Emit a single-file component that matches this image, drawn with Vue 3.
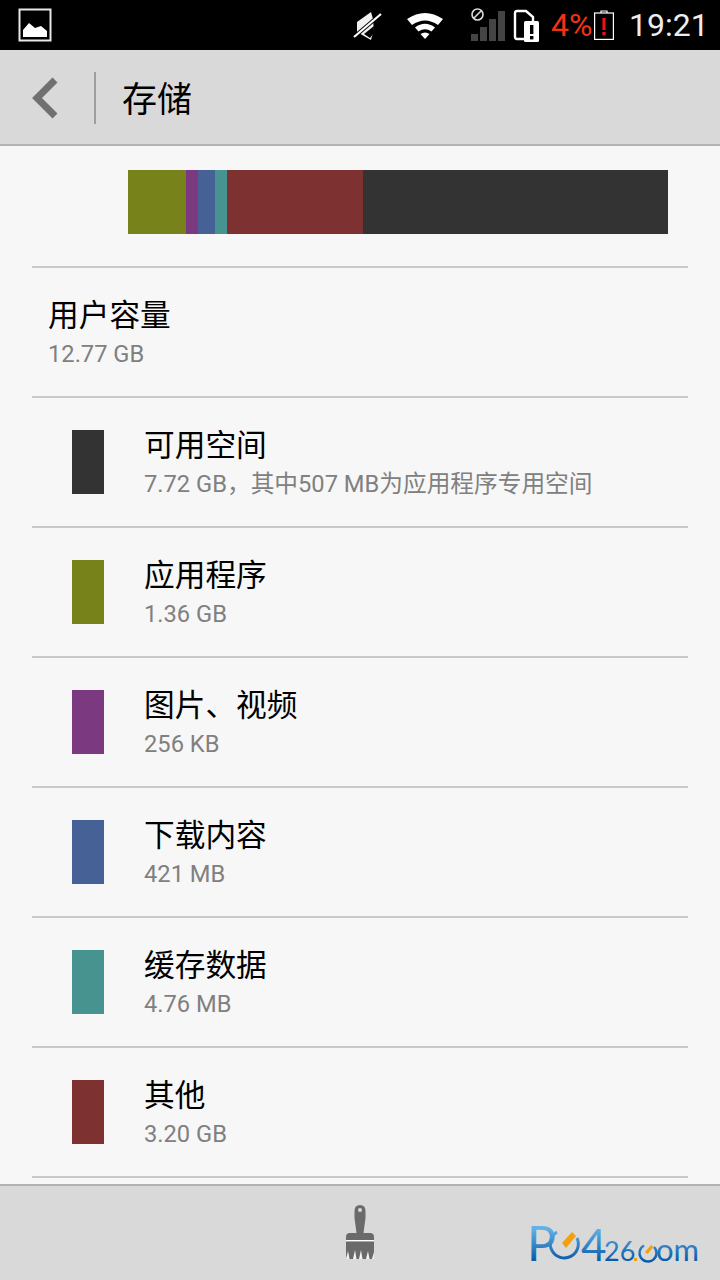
<script setup>
const segments = [
  { color: '#78821a', width: 58 },
  { color: '#7b3a80', width: 12 },
  { color: '#466195', width: 17 },
  { color: '#469390', width: 12 },
  { color: '#7e3131', width: 136 },
  { color: '#333333', width: 305 },
]
const rows = [
  { color: '#333333', title: '可用空间', sub: '7.72 GB，其中507 MB为应用程序专用空间' },
  { color: '#78821a', title: '应用程序', sub: '1.36 GB' },
  { color: '#7b3a80', title: '图片、视频', sub: '256 KB' },
  { color: '#466195', title: '下载内容', sub: '421 MB' },
  { color: '#469390', title: '缓存数据', sub: '4.76 MB' },
  { color: '#7e3131', title: '其他', sub: '3.20 GB' },
]
</script>

<template>
  <div class="phone">
    <header class="status">
      <svg class="pic" width="34" height="34" viewBox="0 0 34 34">
        <rect x="1.500" y="1.500" width="31" height="31" fill="none" stroke="#e8e8e8" stroke-width="2" />
        <path d="M5 29V22L11 15L17 20L23 18L29 23V29Z" fill="#fff" />
      </svg>
      <svg class="mute" width="30" height="30" viewBox="0 0 30 30">
        <path d="M4 12L18 2Q23 15 18 30L4 22Z" fill="#f0f0f0" />
        <path d="M11 24L21 16L20 24L17 28Z" fill="#000" />
        <path d="M1 27L28 4" stroke="#000" stroke-width="4" />
        <path d="M1 27L28 4" stroke="#fff" stroke-width="2.200" />
      </svg>
      <svg class="wifi" width="38" height="27" viewBox="0 0 38 27">
        <path d="M1 7Q19 -5 37 7L32 13Q19 4 6 13Z" fill="#fff" />
        <path d="M9 15.500Q19 8 29 15.500L25.500 19.500Q19 15 12.500 19.500Z" fill="#fff" />
        <path d="M14.500 22Q19 19 23.500 22L19 27Z" fill="#fff" />
      </svg>
      <svg class="signal" width="36" height="34" viewBox="0 0 36 34">
        <rect x="1" y="27" width="7" height="7" fill="#444" />
        <rect x="10" y="20" width="7" height="14" fill="#444" />
        <rect x="19" y="12" width="7" height="22" fill="#444" />
        <rect x="28" y="4" width="7" height="30" fill="#444" />
        <circle cx="7.500" cy="7.500" r="5.500" fill="none" stroke="#ddd" stroke-width="1.600" />
        <path d="M3.500 11.500L11.500 3.500" stroke="#ddd" stroke-width="1.600" />
      </svg>
      <svg class="sim" width="26" height="33" viewBox="0 0 26 33">
        <path d="M2 4Q2 2 4 2H13L20 8V30H4Q2 30 2 28Z" fill="none" stroke="#fff" stroke-width="2.400" />
        <rect x="11" y="12" width="15" height="21" rx="1.500" fill="#fff" />
        <rect x="17" y="16" width="3.400" height="9" fill="#000" />
        <rect x="17" y="27" width="3.400" height="3.400" fill="#000" />
      </svg>
      <span class="pct">4%</span>
      <svg class="batt" width="20" height="30" viewBox="0 0 20 30">
        <path d="M7 3V1H13V3" fill="none" stroke="#fff" stroke-width="1.200" />
        <rect x="0.600" y="3" width="18.800" height="26.400" fill="none" stroke="#fff" stroke-width="1.200" />
        <rect x="8.400" y="8" width="3.200" height="12" fill="#f01010" />
        <rect x="8.400" y="22" width="3.200" height="3.400" fill="#f01010" />
      </svg>
      <span class="time">19:21</span>
    </header>

    <nav class="toolbar">
      <svg class="back" width="28" height="42" viewBox="0 0 28 42">
        <path d="M25 3L7 21L25 39" fill="none" stroke="#707070" stroke-width="7" />
      </svg>
      <span class="divider"></span>
      <h1 class="page-title">存储</h1>
    </nav>

    <main class="content">
      <div class="bar-wrap">
        <div class="bar">
          <span v-for="s in segments" :key="s.color" :style="{ width: s.width + 'px', background: s.color }"></span>
        </div>
      </div>
      <section class="total">
        <div class="title">用户容量</div>
        <div class="sub">12.77 GB</div>
      </section>
      <section v-for="r in rows" :key="r.title" class="row">
        <span class="swatch" :style="{ background: r.color }"></span>
        <div>
          <div class="title">{{ r.title }}</div>
          <div class="sub">{{ r.sub }}</div>
        </div>
      </section>
    </main>

    <footer class="footer">
      <span></span>
      <svg class="broom" width="30" height="56" viewBox="0 0 30 56">
        <path d="M9.500 7Q9.500 1 15 1Q20.500 1 20.500 7V14L18.500 29H25Q29 29 29 33V36H1V33Q1 29 5 29H11.500L9.500 14Z" fill="#6a6a6a" />
        <circle cx="15" cy="6" r="2" fill="#d9d9d9" />
        <rect x="1" y="36" width="28" height="1.300" fill="#fff" />
        <path d="M1 37.500H29V55H1Z" fill="#6a6a6a" />
        <path d="M1 55L3 47L4.500 55ZM8 55L10 46L11.500 55ZM14 55L16 46L17.500 55ZM21 55L23 47L24.500 55ZM27 55L29 48V55Z" fill="#f4f4f4" />
      </svg>
      <svg class="logo" width="176" height="64" viewBox="0 -10 176 64">
        <defs>
          <linearGradient id="lgs" gradientUnits="userSpaceOnUse" x1="0" y1="8" x2="0" y2="42">
            <stop offset="0" stop-color="#66b2e6" />
            <stop offset="1" stop-color="#0457a6" />
          </linearGradient>
        </defs>
        <text x="0" y="41" class="logo-big" fill="url(#lgs)">P</text>
        <path d="M50 18A14 14 0 1 1 30 12" fill="none" stroke="url(#lgs)" stroke-width="3" />
        <path d="M35 23L45 12L49 16L39 28Z" fill="#f0a010" />
        <text x="54" y="41" class="logo-four" fill="url(#lgs)">4</text>
        <text x="77" y="41" class="logo-small" fill="url(#lgs)">26</text>
        <rect x="107" y="38" width="3" height="3" fill="#f0a010" />
        <path d="M127 27A8.500 8.500 0 1 1 117 25.500" fill="none" stroke="url(#lgs)" stroke-width="2.400" />
        <path d="M118 32L124 25L126.500 27L120.500 34Z" fill="#f0a010" />
        <text x="129" y="41" class="logo-om" fill="url(#lgs)">om</text>
      </svg>
    </footer>
  </div>
</template>

<style scoped>
.phone {
  width: 720px;
  height: 1280px;
  display: flex;
  flex-direction: column;
  background: #f7f7f7;
  overflow: hidden;
  font-family: Roboto, "Noto Sans CJK SC", sans-serif;
}
.status {
  height: 50px;
  flex: none;
  background: #000;
  display: flex;
  align-items: center;
  padding-left: 18px;
  color: #fff;
}
.status svg { flex: none; display: block; }
.mute { margin-left: 301px; }
.wifi { margin-left: 23px; }
.signal { margin-left: 26px; margin-top: -2px; }
.sim { margin-left: 7px; }
.pct {
  margin-left: 12px;
  width: 43px;
  font-size: 32px;
  line-height: 50px;
  color: #f5310f;
  white-space: nowrap;
}
.time {
  margin-left: 15px;
  font-size: 32px;
  line-height: 50px;
  color: #ececec;
  font-weight: 400;
  white-space: nowrap;
}
.toolbar {
  flex: none;
  background: #d9d9d9;
  border-bottom: 2px solid #b2b2b2;
  display: flex;
  align-items: center;
  padding: 2px 0 0 30px;
  box-sizing: content-box;
  height: 92px;
}
.back { display: block; flex: none; }
.divider {
  width: 2px;
  height: 52px;
  background: #9e9e9e;
  margin-left: 36px;
}
.page-title {
  margin: -2px 0 0 26px;
  font-family: "Noto Sans CJK SC", sans-serif;
  font-size: 35px;
  font-weight: 400;
  color: #000;
  line-height: 50px;
}
.content { flex: 1; min-height: 0; }
.bar-wrap {
  margin: 0 32px;
  height: 122px;
  box-sizing: border-box;
  padding: 24px 0 0 96px;
  border-bottom: 2px solid #c8c8c8;
}
.bar { display: flex; height: 64px; width: 540px; }
.bar span { display: block; flex: none; height: 64px; }
.total {
  margin: 0 32px;
  height: 130px;
  box-sizing: border-box;
  padding: 25px 0 0 16px;
  border-bottom: 2px solid #c8c8c8;
}
.row {
  margin: 0 32px;
  height: 130px;
  box-sizing: border-box;
  display: flex;
  align-items: center;
  padding-left: 40px;
  gap: 40px;
  border-bottom: 2px solid #c8c8c8;
}
.swatch { width: 32px; height: 64px; flex: none; }
.title {
  font-family: "Noto Sans CJK SC", sans-serif;
  font-size: 30.700px;
  line-height: 40px;
  color: #000;
  white-space: nowrap;
}
.sub {
  font-family: Roboto, "Noto Sans CJK SC", sans-serif;
  font-size: 23.700px;
  line-height: 36px;
  margin-top: 3px;
  color: #808080;
  white-space: nowrap;
}
.footer {
  height: 94px;
  flex: none;
  background: #d9d9d9;
  border-top: 2px solid #b2b2b2;
  display: grid;
  grid-template-columns: 1fr auto 1fr;
  align-items: start;
}
.broom { display: block; margin-top: 18px; }
.logo { display: block; justify-self: end; margin: 24px 17px 0 0; }
.logo-big { font-family: Lato, sans-serif; font-weight: 400; font-size: 48px; }
.logo-four { font-family: Lato, sans-serif; font-weight: 400; font-size: 44px; }
.logo-small { font-family: Lato, sans-serif; font-weight: 400; font-size: 27px; }
.logo-om { font-family: Lato, sans-serif; font-weight: 400; font-size: 31px; }
</style>
